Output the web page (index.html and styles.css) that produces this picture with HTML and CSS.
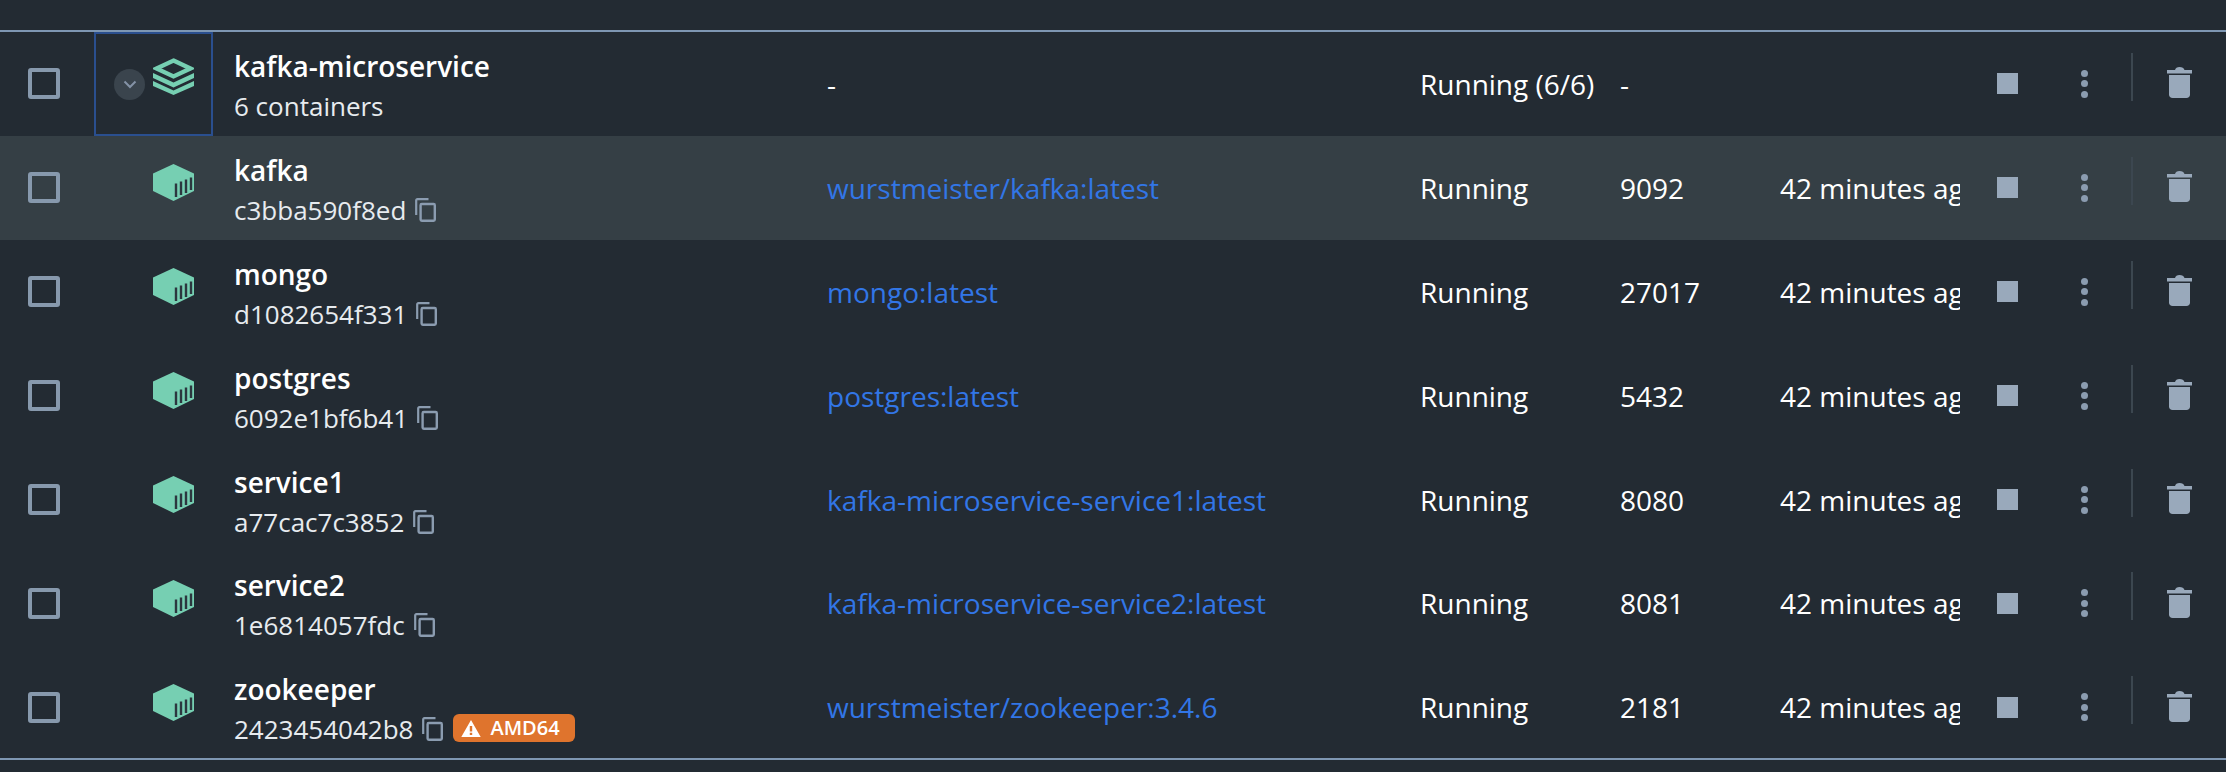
FILE: index.html
```html
<!DOCTYPE html>
<html>
<head>
  <title>Containers</title>
  <link rel="stylesheet" href="styles.css">
</head>
<body>
  <svg class="defs" width="0" height="0">
    <symbol id="box" viewBox="0 0 41 37">
      <path d="M20.5 0 41 9.5V27L20.5 37 0 27V9.5Z" fill="#76cfb2"/>
      <path d="M23 19.5V33M28 17.5V31M33 15.5V29M38 13.5V26" stroke="#2c373f" stroke-width="2.4" fill="none"/>
    </symbol>
    <symbol id="stack" viewBox="0 0 41 37">
      <path d="M20.5 2.500 37.500 10.500 20.500 18.500 3.500 10.500Z" fill="none" stroke="#76cfb2" stroke-width="4.2"/>
      <path d="M0 15 20.5 24.500 41 15V20L20.5 29.500 0 20Z" fill="#76cfb2"/>
      <path d="M0 23 20.5 32.500 41 23V28L20.5 37 0 28Z" fill="#76cfb2"/>
    </symbol>
    <symbol id="copy" viewBox="0 0 21 24">
      <path d="M1.2 17V2.4C1.2 1.7 1.7 1.2 2.4 1.2H13.5" fill="none" stroke="#8b9cb0" stroke-width="2.2"/>
      <rect x="5.6" y="6" width="14.2" height="16.8" rx="1.2" fill="none" stroke="#8b9cb0" stroke-width="2.4"/>
    </symbol>
    <symbol id="trash" viewBox="0 0 25 31">
      <path d="M8 3C8.500 1 10 0 12.500 0S17 1 17.500 3H25V6.500H0V3Z" fill="#99a9bb"/>
      <path d="M2 8H23V27.500C23 29.500 21.500 31 19.500 31H5.500C3.500 31 2 29.500 2 27.500Z" fill="#99a9bb"/>
    </symbol>
  </svg>

  <div class="list">
    <div class="row">
      <div class="cell-check"><span class="checkbox"></span></div>
      <div class="cell-icon selected">
        <span class="expander">
          <svg width="14" height="9" viewBox="0 0 14 9"><path d="M1.500 1.500 7 7 12.500 1.500" fill="none" stroke="#8492a6" stroke-width="2"/></svg>
        </span>
        <svg class="type-icon" width="41" height="37"><use href="#stack"/></svg>
      </div>
      <div class="cell-name">
        <div class="name">kafka-microservice</div>
        <div class="sub">6 containers</div>
      </div>
      <div class="cell-image">-</div>
      <div class="cell-status">Running (6/6)</div>
      <div class="cell-port">-</div>
      <div class="cell-time"></div>
      <div class="actions">
        <span class="stop"></span>
        <span class="dots"><i></i><i></i><i></i></span>
        <span class="divider"></span>
        <svg class="trash" width="25" height="31"><use href="#trash"/></svg>
      </div>
    </div>

    <div class="row hover">
      <div class="cell-check"><span class="checkbox"></span></div>
      <div class="cell-icon"><svg class="type-icon" width="41" height="37"><use href="#box"/></svg></div>
      <div class="cell-name">
        <div class="name">kafka</div>
        <div class="sub">c3bba590f8ed <svg class="copy" width="21" height="24"><use href="#copy"/></svg></div>
      </div>
      <div class="cell-image"><a>wurstmeister/kafka:latest</a></div>
      <div class="cell-status">Running</div>
      <div class="cell-port">9092</div>
      <div class="cell-time">42 minutes ago</div>
      <div class="actions">
        <span class="stop"></span>
        <span class="dots"><i></i><i></i><i></i></span>
        <span class="divider"></span>
        <svg class="trash" width="25" height="31"><use href="#trash"/></svg>
      </div>
    </div>

    <div class="row">
      <div class="cell-check"><span class="checkbox"></span></div>
      <div class="cell-icon"><svg class="type-icon" width="41" height="37"><use href="#box"/></svg></div>
      <div class="cell-name">
        <div class="name">mongo</div>
        <div class="sub">d1082654f331 <svg class="copy" width="21" height="24"><use href="#copy"/></svg></div>
      </div>
      <div class="cell-image"><a>mongo:latest</a></div>
      <div class="cell-status">Running</div>
      <div class="cell-port">27017</div>
      <div class="cell-time">42 minutes ago</div>
      <div class="actions">
        <span class="stop"></span>
        <span class="dots"><i></i><i></i><i></i></span>
        <span class="divider"></span>
        <svg class="trash" width="25" height="31"><use href="#trash"/></svg>
      </div>
    </div>

    <div class="row">
      <div class="cell-check"><span class="checkbox"></span></div>
      <div class="cell-icon"><svg class="type-icon" width="41" height="37"><use href="#box"/></svg></div>
      <div class="cell-name">
        <div class="name">postgres</div>
        <div class="sub">6092e1bf6b41 <svg class="copy" width="21" height="24"><use href="#copy"/></svg></div>
      </div>
      <div class="cell-image"><a>postgres:latest</a></div>
      <div class="cell-status">Running</div>
      <div class="cell-port">5432</div>
      <div class="cell-time">42 minutes ago</div>
      <div class="actions">
        <span class="stop"></span>
        <span class="dots"><i></i><i></i><i></i></span>
        <span class="divider"></span>
        <svg class="trash" width="25" height="31"><use href="#trash"/></svg>
      </div>
    </div>

    <div class="row">
      <div class="cell-check"><span class="checkbox"></span></div>
      <div class="cell-icon"><svg class="type-icon" width="41" height="37"><use href="#box"/></svg></div>
      <div class="cell-name">
        <div class="name">service1</div>
        <div class="sub">a77cac7c3852 <svg class="copy" width="21" height="24"><use href="#copy"/></svg></div>
      </div>
      <div class="cell-image"><a>kafka-microservice-service1:latest</a></div>
      <div class="cell-status">Running</div>
      <div class="cell-port">8080</div>
      <div class="cell-time">42 minutes ago</div>
      <div class="actions">
        <span class="stop"></span>
        <span class="dots"><i></i><i></i><i></i></span>
        <span class="divider"></span>
        <svg class="trash" width="25" height="31"><use href="#trash"/></svg>
      </div>
    </div>

    <div class="row">
      <div class="cell-check"><span class="checkbox"></span></div>
      <div class="cell-icon"><svg class="type-icon" width="41" height="37"><use href="#box"/></svg></div>
      <div class="cell-name">
        <div class="name">service2</div>
        <div class="sub">1e6814057fdc <svg class="copy" width="21" height="24"><use href="#copy"/></svg></div>
      </div>
      <div class="cell-image"><a>kafka-microservice-service2:latest</a></div>
      <div class="cell-status">Running</div>
      <div class="cell-port">8081</div>
      <div class="cell-time">42 minutes ago</div>
      <div class="actions">
        <span class="stop"></span>
        <span class="dots"><i></i><i></i><i></i></span>
        <span class="divider"></span>
        <svg class="trash" width="25" height="31"><use href="#trash"/></svg>
      </div>
    </div>

    <div class="row">
      <div class="cell-check"><span class="checkbox"></span></div>
      <div class="cell-icon"><svg class="type-icon" width="41" height="37"><use href="#box"/></svg></div>
      <div class="cell-name">
        <div class="name">zookeeper</div>
        <div class="sub">2423454042b8 <svg class="copy" width="21" height="24"><use href="#copy"/></svg>
          <span class="badge">
            <svg width="20" height="17" viewBox="0 0 16 14"><path fill-rule="evenodd" d="M8 0 16 14H0ZM7 5V9.500H9V5ZM7 10.500V12.300H9V10.500Z" fill="#fff"/></svg>
            AMD64
          </span>
        </div>
      </div>
      <div class="cell-image"><a>wurstmeister/zookeeper:3.4.6</a></div>
      <div class="cell-status">Running</div>
      <div class="cell-port">2181</div>
      <div class="cell-time">42 minutes ago</div>
      <div class="actions">
        <span class="stop"></span>
        <span class="dots"><i></i><i></i><i></i></span>
        <span class="divider"></span>
        <svg class="trash" width="25" height="31"><use href="#trash"/></svg>
      </div>
    </div>
  </div>
</body>
</html>
```

FILE: styles.css
```css
body {
  margin: 0;
  height: 772px;
  overflow: hidden;
  background-color: #232b33;
  color: #fff;
  font-family: "Open Sans", sans-serif;
  font-size: 28px;
}
.defs {
  display: block;
  height: 0;
}
.list {
  margin-top: 30px;
  height: 726px;
  border-top: 2px solid #7e97b3;
  border-bottom: 2px solid #7e97b3;
}
.row {
  display: flex;
  align-items: center;
  height: 103.9px;
}
.hover {
  background-color: #353f45;
}
.cell-check {
  width: 94px;
  padding-left: 28px;
  box-sizing: border-box;
  flex-shrink: 0;
}
.checkbox {
  display: block;
  width: 32px;
  height: 31px;
  box-sizing: border-box;
  border: 4px solid #8799ad;
  border-radius: 3px;
}
.cell-icon {
  width: 119px;
  height: 100%;
  box-sizing: border-box;
  display: flex;
  align-items: center;
  flex-shrink: 0;
  position: relative;
}
.selected {
  border: 2px solid #2a4f8f;
}
.expander {
  position: absolute;
  left: 18px;
  top: 35px;
  width: 31px;
  height: 31px;
  border-radius: 50%;
  background-color: #3a444d;
  display: flex;
  align-items: center;
  justify-content: center;
}
.type-icon {
  margin-left: 59px;
  margin-top: -10px;
}
.selected .type-icon {
  margin-left: 57px;
  margin-top: -14px;
}
.cell-name {
  width: 614px;
  padding: 4px 0 0 21px;
  box-sizing: border-box;
  flex-shrink: 0;
}
.name {
  font-weight: 600;
  line-height: 40px;
}
.sub {
  display: flex;
  align-items: center;
  gap: 9px;
  font-size: 26px;
  line-height: 40px;
  color: #e7ebef;
}
.copy {
  flex-shrink: 0;
}
.badge {
  display: inline-flex;
  align-items: center;
  gap: 9px;
  height: 28px;
  margin: -2px 0 0 1px;
  padding: 0 15px 0 8px;
  border-radius: 6px;
  background-color: #df742d;
  color: #fff;
  font-size: 20px;
  font-weight: 600;
}
.cell-image {
  width: 593px;
  flex-shrink: 0;
}
.cell-image a {
  color: #3276e6;
}
.cell-status {
  width: 200px;
  flex-shrink: 0;
}
.cell-port {
  width: 160px;
  flex-shrink: 0;
}
.cell-time {
  width: 180px;
  overflow: hidden;
  white-space: nowrap;
  flex-shrink: 0;
}
.actions {
  display: flex;
  align-items: center;
  padding-left: 37px;
}
.stop {
  width: 21px;
  height: 21px;
  background-color: #99a9bb;
}
.dots {
  display: flex;
  flex-direction: column;
  gap: 3.5px;
  margin-left: 63px;
}
.dots i {
  width: 7px;
  height: 7px;
  border-radius: 50%;
  background-color: #8b9cb0;
}
.divider {
  width: 2px;
  height: 48px;
  margin: -14px 0 0 43px;
  background-color: #3c4750;
}
.trash {
  margin-left: 34px;
  margin-top: -2px;
}
```
